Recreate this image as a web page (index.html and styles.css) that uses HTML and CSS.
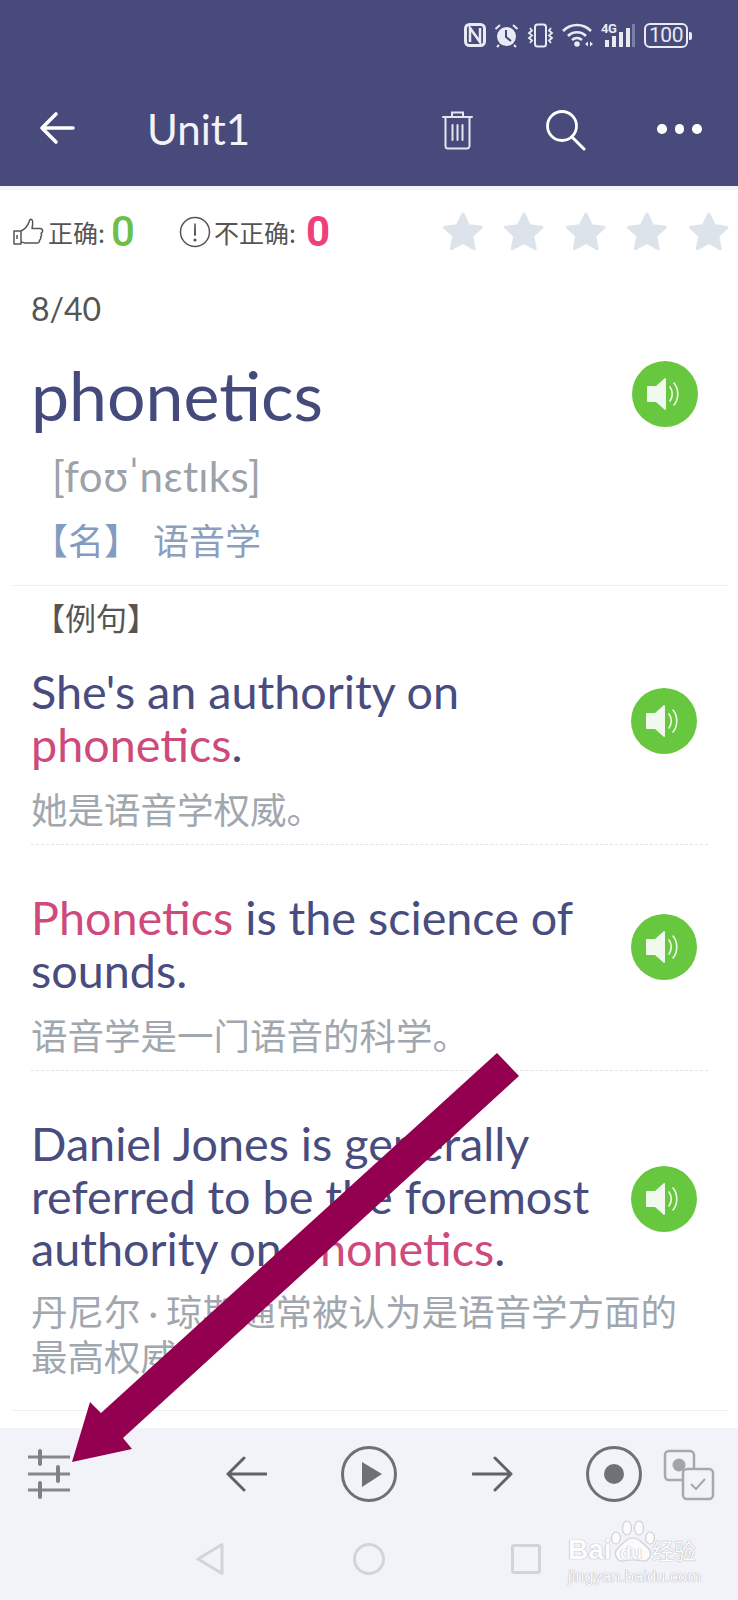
FILE: index.html
```html
<!DOCTYPE html>
<html lang="zh">
<head>
<meta charset="utf-8">
<title>Unit1</title>
<link rel="stylesheet" href="styles.css">
</head>
<body>
<svg class="defs" width="0" height="0">
  <symbol id="speaker" viewBox="0 0 66 66">
    <circle cx="33" cy="33" r="33" fill="#67c73f"/>
    <path d="M16 25h8l9-8a1 1 0 0 1 1 1v30a1 1 0 0 1-1 1l-9-8h-8a1 1 0 0 1-1-1V26a1 1 0 0 1 1-1z" fill="#f1f8ee"/>
    <path d="M38 26c3 4 3 10 0 14M42 22c5 6 5 16 0 22" fill="none" stroke="#f1f8ee" stroke-width="1.6" stroke-linecap="round"/>
  </symbol>
  <symbol id="star" viewBox="0 0 46 46">
    <path d="M23 5l5.4 11.8 12.6 1.5-9.3 8.7 2.5 12.8L23 33.5 11.300 39.800l2.500-12.800-9.300-8.700 12.600-1.500z" fill="#dde3ea" stroke="#dde3ea" stroke-width="3" stroke-linejoin="round"/>
  </symbol>
</svg>

<header class="appbar">
  <div class="status">
    <svg class="st-nfc" width="22" height="24" viewBox="0 0 22 24"><rect x="1.500" y="1.500" width="19" height="21" rx="4" fill="none" stroke="#e9eaf3" stroke-width="3"/><path d="M6 19V5l10 14V5" fill="none" stroke="#e9eaf3" stroke-width="2.500"/></svg>
    <svg class="st-alarm" width="25" height="25" viewBox="0 0 25 25"><circle cx="12.500" cy="13.500" r="9.500" fill="#e9eaf3"/><path d="M12 7v7l5 4" fill="none" stroke="#484a7b" stroke-width="2"/><path d="M1.500 6L6 2M23.500 6L19 2M5 22l-2 2M20 22l2 2" stroke="#e9eaf3" stroke-width="2"/></svg>
    <svg class="st-vib" width="29" height="25" viewBox="0 0 29 25"><rect x="9" y="1.500" width="11" height="22" rx="2.500" fill="none" stroke="#e9eaf3" stroke-width="2"/><path d="M4 5l2 2.500-3 2.500 3 2.500-3 2.500 3 2.500-2 2.500M25 5l-2 2.500 3 2.500-3 2.500 3 2.500-3 2.500 2 2.500" fill="none" stroke="#e9eaf3" stroke-width="1.800"/></svg>
    <svg class="st-wifi" width="32" height="24" viewBox="0 0 32 24"><path d="M1 8c8-8 20-8 28 0M6 13c5-5 13-5 18 0M10 17c3-2.500 7-2.500 10 0" fill="none" stroke="#e9eaf3" stroke-width="2.600"/><circle cx="15" cy="21" r="2.800" fill="#e9eaf3"/><path d="M23 21l3-2.500v5zM31 21l-3-2.500v5z" fill="#e9eaf3"/></svg>
    <div class="st-net">
      <span class="st-4g">4G</span>
      <svg width="34" height="25" viewBox="0 0 34 25"><rect x="4" y="17" width="4" height="7" fill="#e9eaf3"/><rect x="11" y="13" width="4" height="11" fill="#e9eaf3"/><rect x="18" y="9" width="4" height="15" fill="#e9eaf3"/><rect x="25" y="5" width="4" height="19" fill="#e9eaf3"/><rect x="31" y="1" width="3" height="23" fill="#7c7ea6"/></svg>
    </div>
    <div class="st-batt"><span class="st-level">100</span><i class="st-nub"></i></div>
  </div>
  <div class="toolbar">
    <svg class="tb-back" width="36" height="34" viewBox="0 0 36 34"><path d="M34 17H3M17 3L3 17l14 14" fill="none" stroke="#fff" stroke-width="3.600" stroke-linecap="round" stroke-linejoin="round"/></svg>
    <h1 class="tb-title">Unit1</h1>
    <svg class="tb-trash" width="33" height="40" viewBox="0 0 33 40"><path d="M2 7h29M11 6V2.500h11V6M4.500 8v28a2.500 2.500 0 0 0 2.500 2.500h19a2.500 2.500 0 0 0 2.500-2.500V8M11.500 15v15M16.500 15v15M21.500 15v15" fill="none" stroke="#e4e5ef" stroke-width="2" stroke-linecap="round"/></svg>
    <svg class="tb-search" width="42" height="42" viewBox="0 0 42 42"><circle cx="17" cy="17" r="14.500" fill="none" stroke="#fff" stroke-width="2.800"/><path d="M27 28l12 12" stroke="#fff" stroke-width="3" stroke-linecap="round"/></svg>
    <div class="tb-more"><i></i><i></i><i></i></div>
  </div>
</header>

<main class="content">
  <div class="stats">
    <svg class="ic-thumb" width="32" height="28" viewBox="0 0 32 28"><path d="M1 13h7v13H1zM8 13c4-2 7-6 8-9 .5-2 1-3 2.500-2.500 2 .8 1.500 4 .5 9h8c2 0 3 1.500 2.500 3-.3 1-1 1.500-1.500 1.800.8.800.8 2.700-.5 3.500.6 1 .3 2.700-1 3.300.3 1.400-.7 3-2.500 3H13c-2 0-3-1-5-1M4 17v4" fill="none" stroke="#555" stroke-width="1.500" stroke-linejoin="round"/></svg>
    <span class="st-label">正确:</span>
    <span class="st-num good">0</span>
    <svg class="ic-warn" width="32" height="32" viewBox="0 0 32 32"><circle cx="16" cy="16" r="14.500" fill="none" stroke="#555" stroke-width="1.500"/><path d="M16 8l-.3 11h.600z" fill="#555" stroke="#555" stroke-width="1.500" stroke-linejoin="round"/><circle cx="16" cy="24" r="1.600" fill="#555"/></svg>
    <span class="st-label">不正确:</span>
    <span class="st-num bad">0</span>
    <div class="stars">
      <svg width="46" height="46"><use href="#star"/></svg>
      <svg width="46" height="46"><use href="#star"/></svg>
      <svg width="46" height="46"><use href="#star"/></svg>
      <svg width="46" height="46"><use href="#star"/></svg>
      <svg width="46" height="46"><use href="#star"/></svg>
    </div>
  </div>

  <div class="progress">8/40</div>

  <section class="word">
    <div class="word-head">
      <div class="word-text">phonetics</div>
      <svg class="speak head" width="66" height="66"><use href="#speaker"/></svg>
    </div>
    <div class="ipa">[foʊˈnɛtɪks]</div>
    <div class="meaning"><b class="pos">【名】</b><span class="gloss">语音学</span></div>
  </section>

  <div class="heading first">【例句】</div>

  <article class="example">
    <div class="ex-row">
      <p class="en">She's an authority on <em>phonetics</em>.</p>
      <svg class="speak" width="66" height="66"><use href="#speaker"/></svg>
    </div>
    <p class="zh">她是语音学权威。</p>
  </article>

  <article class="example">
    <div class="ex-row">
      <p class="en"><em>Phonetics</em> is the science of sounds.</p>
      <svg class="speak" width="66" height="66"><use href="#speaker"/></svg>
    </div>
    <p class="zh">语音学是一门语音的科学。</p>
  </article>

  <article class="example last">
    <div class="ex-row">
      <p class="en">Daniel Jones is generally referred to be the foremost authority on <em>phonetics</em>.</p>
      <svg class="speak" width="66" height="66"><use href="#speaker"/></svg>
    </div>
    <p class="zh">丹尼尔<span class="mid">·</span>琼斯通常被认为是语音学方面的最高权威。</p>
  </article>

  <div class="heading next">【同根词汇】</div>
</main>

<footer class="dock">
  <div class="controls">
    <svg class="c-sliders" width="44" height="50" viewBox="0 0 44 50"><path d="M1 8h42M1 25h42M1 41h42" stroke="#85878a" stroke-width="3"/><path d="M13 2v13M31 18v14M13 34v14" stroke="#7f8184" stroke-width="4" stroke-linecap="round"/></svg>
    <svg class="c-prev" width="42" height="36" viewBox="0 0 42 36"><path d="M41 18H3M19 2L3 18l16 16" fill="none" stroke="#606266" stroke-width="3" stroke-linecap="round" stroke-linejoin="round"/></svg>
    <svg class="c-play" width="58" height="58" viewBox="0 0 58 58"><circle cx="29" cy="29" r="26.500" fill="none" stroke="#6f7073" stroke-width="3"/><path d="M22 17l20 12-20 13z" fill="#6f7073"/></svg>
    <svg class="c-next" width="42" height="36" viewBox="0 0 42 36"><path d="M1 18h38M23 2l16 16-16 16" fill="none" stroke="#606266" stroke-width="3" stroke-linecap="round" stroke-linejoin="round"/></svg>
    <svg class="c-rec" width="58" height="58" viewBox="0 0 58 58"><circle cx="29" cy="29" r="26.500" fill="none" stroke="#6f7073" stroke-width="3"/><circle cx="29" cy="29" r="10" fill="#707174"/></svg>
    <svg class="c-toggle" width="52" height="52" viewBox="0 0 52 52"><rect x="2" y="2" width="29" height="29" rx="4" fill="none" stroke="#a7a8ad" stroke-width="2.500"/><circle cx="16" cy="16" r="6.500" fill="#a3a4a9"/><rect x="20" y="20" width="30" height="30" rx="4" fill="#f2f3f9" stroke="#a7a8ad" stroke-width="2.500"/><path d="M28 35l5 5 9-10" fill="none" stroke="#a7a8ad" stroke-width="2"/></svg>
  </div>
  <nav class="sysnav">
    <svg width="30" height="34" viewBox="0 0 30 34"><path d="M27 2.500v29L3 17z" fill="none" stroke="#d3d4d7" stroke-width="3" stroke-linejoin="round"/></svg>
    <svg width="32" height="32" viewBox="0 0 32 32"><circle cx="16" cy="16" r="14.500" fill="none" stroke="#d3d4d7" stroke-width="3"/></svg>
    <svg width="30" height="30" viewBox="0 0 30 30"><rect x="1.500" y="1.500" width="27" height="27" rx="1.500" fill="none" stroke="#d3d4d7" stroke-width="3"/></svg>
  </nav>
</footer>

<div class="watermark">
  <svg class="wm-paw" width="44" height="46" viewBox="0 0 44 46"><g fill="#fbfbfd" stroke="#cfd0d6" stroke-width="1.200"><ellipse cx="5" cy="18" rx="4.500" ry="6"/><ellipse cx="16" cy="8" rx="4.500" ry="7"/><ellipse cx="28" cy="8" rx="4.500" ry="7"/><ellipse cx="39" cy="18" rx="4.500" ry="6"/><path d="M22 18c7 0 10 6 15 10 5 5 2 14-6 13-4-1-6-1-9-1s-5 0-9 1c-8 1-11-8-6-13 5-4 8-10 15-10z"/></g></svg>
  <div class="wm-top"><span class="wm-bai">Bai</span><span class="wm-du">du</span><span class="wm-cn">经验</span></div>
  <div class="wm-url">jingyan.baidu.com</div>
</div>

<svg class="pointer" width="738" height="1600" viewBox="0 0 738 1600"><path d="M519 1076L123 1438 132 1449 72 1462 90 1402 101 1413 497 1053z" fill="#93004f"/></svg>
</body>
</html>
```

FILE: styles.css
```css
* { box-sizing: border-box; }
html, body { margin: 0; padding: 0; }
body {
  position: relative;
  width: 738px;
  height: 1600px;
  overflow: hidden;
  display: flex;
  flex-direction: column;
  background: #fff;
  font-family: Lato, "Noto Sans CJK SC", sans-serif;
  font-variant-ligatures: none;
}
.defs { position: absolute; }
svg { display: block; flex: none; }

/* app bar */
.appbar {
  flex: none;
  height: 186px;
  background: #484a7b;
  color: #fff;
}
.status {
  height: 94px;
  padding: 23px 0 0 464px;
  display: flex;
  align-items: flex-start;
  gap: 7px;
  color: #e9eaf3;
}
.st-alarm { margin-left: 1px; }
.st-net { position: relative; width: 34px; height: 25px; }
.st-4g {
  position: absolute;
  left: 0;
  top: -1px;
  font: 700 13px/13px Roboto, sans-serif;
  letter-spacing: -0.5px;
}
.st-net svg { width: 34px; }
.st-batt {
  display: flex;
  align-items: center;
  height: 25px;
  width: 48px;
  margin-left: 2px;
}
.st-level {
  flex: none;
  width: 44px;
  height: 25px;
  border: 2px solid #e9eaf3;
  border-radius: 6px;
  font: 400 21px/21px Roboto, sans-serif;
  text-align: center;
  letter-spacing: -0.5px;
}
.st-nub {
  width: 3px;
  height: 8px;
  margin-left: 1px;
  background: #e9eaf3;
  border-radius: 0 2px 2px 0;
}
.toolbar {
  height: 92px;
  display: flex;
  align-items: center;
  padding-left: 39px;
}
.tb-back { margin-top: -24px; width: 36px; }
.tb-title {
  margin: -22px 0 0 72px;
  width: 294px;
  font: 400 42px/50px Lato, sans-serif;
  color: #f2f2f7;
}
.tb-trash { margin-top: -20px; }
.tb-search { margin: -20px 0 0 71px; }
.tb-more {
  margin: -22px 0 0 70px;
  display: flex;
  gap: 8px;
}
.tb-more i {
  width: 9.500px;
  height: 9.500px;
  border-radius: 50%;
  background: #fff;
}

/* content */
.content {
  flex: 1;
  min-height: 0;
  overflow: hidden;
  border-top: 4px solid #f3f5fa;
}
.stats {
  height: 84px;
  padding-left: 13px;
  display: flex;
  align-items: center;
  color: #555;
}
.st-label {
  font: 400 25px/30px "Noto Sans CJK SC", sans-serif;
  margin-left: 3px;
}
.st-num { font-family: Roboto, sans-serif; font-size: 42px; line-height: 50px; }
.st-num.good { color: #6cc04a; width: 68px; margin-left: 6px; font-weight: 500; }
.st-num.bad { color: #ef3f7c; width: 134px; margin-left: 10px; font-weight: 700; }
.stars {
  display: flex;
  gap: 15.500px;
}
.progress {
  margin-top: 15px;
  padding-left: 31px;
  font: 400 32px/40px Lato, sans-serif;
  color: #555;
}
.word {
  margin: 0 10px 0 12px;
  padding: 26px 0 21px;
  border-bottom: 1px solid #f0f1f3;
}
.word-head {
  display: flex;
  justify-content: space-between;
  align-items: flex-start;
  padding: 0 30px 0 19px;
}
.speak.head { margin-top: 6px; }
.word-text {
  font: 400 68px/80px Lato, sans-serif;
  color: #454a7c;
}
.ipa {
  padding-left: 40px;
  margin-top: 16px;
  font: 400 42px/50px Lato, "DejaVu Sans", sans-serif;
  letter-spacing: 0.5px;
  color: #9ca2a9;
}
.meaning {
  display: flex;
  padding-left: 20px;
  margin-top: 13px;
  font: 400 36px/50px "Noto Sans CJK SC", sans-serif;
  color: #829bc1;
}
.pos { font-weight: 400; width: 121px; }
.gloss { color: #8c9fbd; }

.heading {
  padding-left: 34px;
  font: 400 31px/40px "Noto Sans CJK SC", sans-serif;
  color: #555;
}
.heading.first { margin-top: 11px; }
.heading.next { margin-top: 10px; }

.example {
  margin: 28px 30px 0 31px;
  padding-bottom: 14px;
  border-bottom: 1px dashed #e2e3e6;
}
.example + .example { margin-top: 46px; }
.example.last {
  margin-right: 10px;
  margin-left: 12px;
  padding-left: 19px;
  border-bottom: 1px solid #eeeff1;
  padding-bottom: 33px;
}
.ex-row {
  display: flex;
  align-items: center;
  justify-content: space-between;
  padding-right: 11px;
}
.ex-row .speak { margin-top: 6px; }
.example.last .ex-row { padding-right: 31px; }
.en {
  margin: 0;
  width: 590px;
  font: 400 46.700px/52.500px Lato, sans-serif;
  color: #484c7e;
}
.en em { font-style: normal; color: #cf4a7c; }
.zh {
  margin: 17px 0 0;
  font: 400 36.500px/43px "Noto Sans CJK SC", sans-serif;
  color: #a1a7ae;
}
.example.last .zh { margin-top: 14px; padding-right: 20px; }
.mid { font-family: Lato, sans-serif; padding: 0 8px; }

/* dock */
.dock {
  flex: none;
  height: 172px;
  background: #f2f3f9;
}
.controls {
  height: 92px;
  display: flex;
  align-items: center;
  padding-left: 27px;
}
.c-prev { margin-left: 154px; }
.c-play { margin-left: 73px; }
.c-next { margin-left: 74px; }
.c-rec { margin-left: 71px; }
.c-toggle { margin: 2px 0 0 20px; }
.sysnav {
  display: flex;
  align-items: center;
  height: 40px;
  margin-top: 19px;
  padding-left: 195px;
}
.sysnav svg:nth-child(2) { margin-left: 128px; }
.sysnav svg:nth-child(3) { margin-left: 126px; }

/* watermark & annotation */
.watermark {
  position: absolute;
  left: 568px;
  top: 1516px;
  width: 132px;
  height: 68px;
  color: #fdfdfe;
  text-shadow: 0 0 1px #a9aab2, 0 0 1px #a9aab2;
}
.wm-top {
  position: absolute;
  left: 0;
  top: 19px;
  display: flex;
  align-items: baseline;
}
.wm-bai { font: 700 28px/28px "Liberation Sans", sans-serif; width: 52px; }
.wm-du { font: 700 18px/28px "Liberation Sans", sans-serif; width: 32px; }
.wm-cn { font: 400 22px/28px "Noto Sans CJK SC", sans-serif; }
.wm-url {
  position: absolute;
  left: 0;
  top: 51px;
  font: 400 16.500px/18px "Liberation Sans", sans-serif;
  white-space: nowrap;
}
.wm-paw { position: absolute; left: 43px; top: 4px; }
.pointer { position: absolute; left: 0; top: 0; pointer-events: none; }
```
